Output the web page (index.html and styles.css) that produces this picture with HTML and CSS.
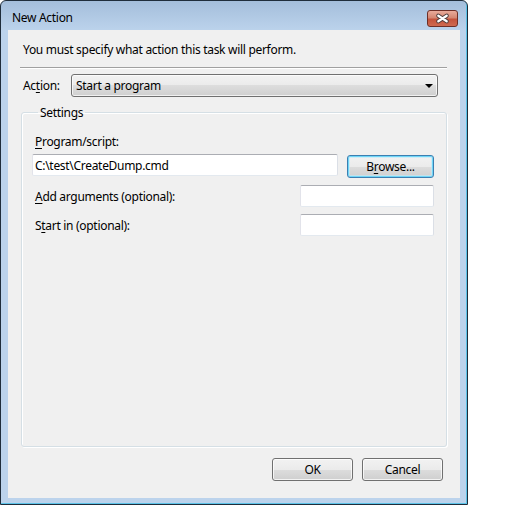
FILE: index.html
```html
<!DOCTYPE html>
<html lang="en">
<head>
  <meta charset="UTF-8">
  <title>New Action</title>
  <link rel="stylesheet" href="styles.css">
</head>
<body>
  <div class="window">
    <div class="titlebar">
      <span class="title">New Action</span>
      <button class="close-btn" aria-label="Close">
        <svg width="31" height="17" viewBox="0 0 31 17">
          <path d="M11 5.5 L20 11.5 M20 5.5 L11 11.5" stroke="#4b3a3a" stroke-width="4.4" stroke-linecap="round" fill="none"/>
          <path d="M11 5.5 L20 11.5 M20 5.5 L11 11.5" stroke="#fff" stroke-width="2.4" stroke-linecap="round" fill="none"/>
        </svg>
      </button>
    </div>

    <div class="client">
      <p class="intro">You must specify what action this task will perform.</p>
      <hr class="separator">

      <div class="action-row">
        <label class="action-label">Ac<u>t</u>ion:</label>
        <div class="combo">
          <span>Start a program</span>
          <span class="combo-arrow"></span>
        </div>
      </div>

      <fieldset class="settings">
        <legend>Settings</legend>
        <label class="field-label"><u>P</u>rogram/script:</label>
        <div class="program-row">
          <input type="text" class="textbox program-box" value="C:\test\CreateDump.cmd">
          <button class="btn btn-default">B<u>r</u>owse...</button>
        </div>
        <div class="option-row">
          <label class="field-label"><u>A</u>dd arguments (optional):</label>
          <input type="text" class="textbox short-box">
        </div>
        <div class="option-row">
          <label class="field-label">S<u>t</u>art in (optional):</label>
          <input type="text" class="textbox short-box">
        </div>
      </fieldset>

      <div class="footer">
        <button class="btn">OK</button>
        <button class="btn">Cancel</button>
      </div>
    </div>
  </div>
</body>
</html>
```

FILE: styles.css
```css
body {
  margin: 0;
  background-color: #fff;
  font-family: "Noto Sans", "Open Sans", sans-serif;
  font-size: 12px;
  line-height: 15px;
  letter-spacing: -0.3px;
  color: #000;
}

u {
  text-decoration-thickness: 1px;
  text-underline-offset: 2px;
}

.window {
  width: 468px;
  height: 505px;
  box-sizing: border-box;
  display: flex;
  flex-direction: column;
  padding: 0 7px 6px 7px;
  border: 1px solid #1f2d3b;
  border-radius: 6px 6px 0 0;
  background: linear-gradient(#a4bedb, #bcd3ec 30px, #bcd3ec);
  box-shadow: inset -1px -1px 0 #5cc3e8;
}

.titlebar {
  height: 29px;
  display: flex;
  align-items: flex-start;
  justify-content: space-between;
}

.title {
  margin: 9px 0 0 4px;
}

.close-btn {
  width: 31px;
  height: 17px;
  margin: 9px 2px 0 0;
  padding: 0;
  border: 1px solid #6e2f27;
  border-radius: 3px;
  background: linear-gradient(#e9ab9b, #d58772 45%, #c4533c 55%, #cf6a50);
  display: flex;
  align-items: center;
  justify-content: center;
}

.close-btn svg {
  display: block;
}

.client {
  flex: 1;
  display: flex;
  flex-direction: column;
  background-color: #f0f0f0;
}

.intro {
  margin: 12px 0 0 15px;
}

.separator {
  height: 0;
  margin: 10px 13px 0 12px;
  border: none;
  border-top: 1px solid #a0a0a0;
  border-bottom: 1px solid #fff;
}

.action-row {
  display: flex;
  align-items: center;
  margin: 5px 22px 0 15px;
}

.action-label {
  width: 48px;
}

.combo {
  flex: 1;
  height: 23px;
  box-sizing: border-box;
  display: flex;
  align-items: center;
  justify-content: space-between;
  padding: 0 4px 0 4px;
  border: 1px solid #707070;
  border-radius: 3px;
  background: linear-gradient(#f2f2f2, #ebebeb 50%, #dddddd 50%, #cfcfcf);
  box-shadow: inset 0 0 0 1px rgba(255, 255, 255, 0.7);
}

.combo-arrow {
  width: 0;
  height: 0;
  border-left: 4px solid transparent;
  border-right: 4px solid transparent;
  border-top: 4px solid #000;
}

.settings {
  flex: 1;
  margin: 8px 13px 0 13px;
  padding: 14px 12px 0 10px;
  border: 1px solid #d5dfe5;
  border-radius: 3px;
  box-shadow: inset 1px 1px 0 #fff, 1px 1px 0 #fff;
  min-width: 0;
}

.settings legend {
  margin-left: 6px;
  padding: 0 2px;
}

.field-label {
  margin-left: 3px;
}

.settings > .field-label {
  display: block;
}

.program-row {
  display: flex;
  align-items: flex-start;
  gap: 9px;
  margin-top: 5px;
}

.option-row {
  display: flex;
  align-items: center;
  justify-content: space-between;
  margin-top: 7px;
}

.textbox {
  height: 22px;
  box-sizing: border-box;
  margin: 0;
  padding: 0 2px;
  border: 1px solid;
  border-color: #abadb3 #dbdfe6 #e3e9ef #e2e3ea;
  border-radius: 2px;
  background-color: #fff;
  font: inherit;
  letter-spacing: inherit;
  color: #000;
  outline: none;
}

.program-box {
  width: 306px;
}

.short-box {
  width: 134px;
}

.btn {
  width: 81px;
  height: 23px;
  box-sizing: border-box;
  padding: 0;
  border: 1px solid #707070;
  border-radius: 3px;
  background: linear-gradient(#f2f2f2, #ebebeb 50%, #dddddd 50%, #cfcfcf);
  box-shadow: inset 0 0 0 1px rgba(255, 255, 255, 0.75);
  font: inherit;
  letter-spacing: inherit;
  color: #000;
}

.btn-default {
  width: 87px;
  margin-top: 1px;
  border-color: #3c7fb1;
  box-shadow: inset 0 0 0 1px #6fd6f8, inset 0 0 0 2px rgba(190, 235, 250, 0.6);
}

.footer {
  display: flex;
  justify-content: flex-end;
  gap: 9px;
  margin: 11px 17px 17px 0;
}
```
